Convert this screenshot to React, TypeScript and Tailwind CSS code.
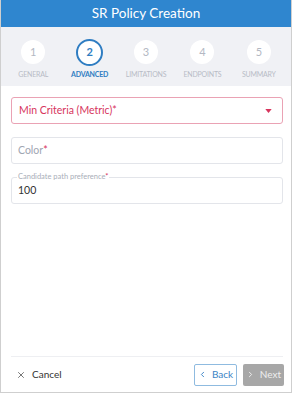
import { X, ChevronLeft, ChevronRight } from 'lucide-react';

const steps = [
  { n: 1, label: 'GENERAL' },
  { n: 2, label: 'ADVANCED', active: true },
  { n: 3, label: 'LIMITATIONS' },
  { n: 4, label: 'ENDPOINTS' },
  { n: 5, label: 'SUMMARY' }
];

export default function App() {
  return (
    <div
      className="flex h-[393px] w-[292px] flex-col border-x border-b border-[#cfcfcf] bg-white"
      style={{ fontFamily: 'Lato, "Open Sans", sans-serif' }}
    >
      <header className="flex h-[27px] items-center justify-center bg-[#2f86cf] text-[13.5px] text-white">
        SR Policy Creation
      </header>

      <div className="flex h-[59px] bg-[#f0f1f5] px-[4px] pt-[11px]">
        {steps.map((s) => (
          <div key={s.n} className="flex flex-1 flex-col items-center">
            <div className="flex h-[28px] items-center justify-center">
              {s.active ? (
                <span className="flex h-[27px] w-[27px] items-center justify-center rounded-full border-2 border-[#2f7dc2] bg-white text-[11px] font-bold text-[#2f7dc2]">
                  2
                </span>
              ) : (
                <span className="flex h-[24px] w-[24px] items-center justify-center rounded-full bg-white text-[11px] text-[#b3b8c3]">
                  {s.n}
                </span>
              )}
            </div>
            <span
              className={`mt-[3px] text-[7px] tracking-[-0.2px] ${
                s.active ? 'font-bold text-[#2f7dc2]' : 'text-[#b8bcc6]'
              }`}
            >
              {s.label}
            </span>
          </div>
        ))}
      </div>

      <div className="flex flex-1 flex-col pl-[10px] pr-[8px] pt-[11px]">
        <div className="flex h-[27px] items-center justify-between rounded-[3px] border border-[#eaa2b4] pl-[7px] pr-[10px] text-[10.5px] text-[#d7355d]">
          <span>Min Criteria (Metric)*</span>
          <svg width="7" height="4" viewBox="0 0 8 5">
            <path d="M0 0h8L4 5z" fill="#d7355d" />
          </svg>
        </div>

        <div className="mt-[13px] flex h-[27px] items-center rounded-[3px] border border-[#e3e5ea] px-[6px] text-[10.5px] text-[#a0a6b2]">
          Color<span className="text-[#d7355d]">*</span>
        </div>

        <div className="relative mt-[13px] flex h-[27px] items-center rounded-[3px] border border-[#e3e5ea] px-[6px] text-[10.5px] text-[#333]">
          <span className="absolute -top-[7px] left-[5px] bg-white px-[1px] text-[7.5px] leading-[12px] text-[#a9aeb8]">
            Candidate path preference<span className="text-[#d7355d]">*</span>
          </span>
          100
        </div>
      </div>

      <div className="ml-[10px] mr-[8px] border-t border-[#eeeff2]" />
      <div className="flex h-[35px] items-center justify-between pl-[15px] pr-[7px]">
        <div className="flex items-center gap-[6px] text-[10px] text-[#333]">
          <X className="h-[10px] w-[10px]" strokeWidth={1.6} />
          Cancel
        </div>
        <div className="flex gap-[6px]">
          <button className="flex h-[22px] w-[43px] items-center justify-center gap-[5px] rounded-[2px] border border-[#8fbbe0] text-[10px] text-[#3a83c5]">
            <ChevronLeft className="h-[9px] w-[9px]" strokeWidth={2.5} />
            Back
          </button>
          <button className="flex h-[22px] w-[41px] items-center justify-center gap-[5px] rounded-[2px] bg-[#a7a7a7] text-[10px] text-[#eeeeee]">
            <ChevronRight className="h-[9px] w-[9px]" strokeWidth={2.5} />
            Next
          </button>
        </div>
      </div>
    </div>
  );
}
